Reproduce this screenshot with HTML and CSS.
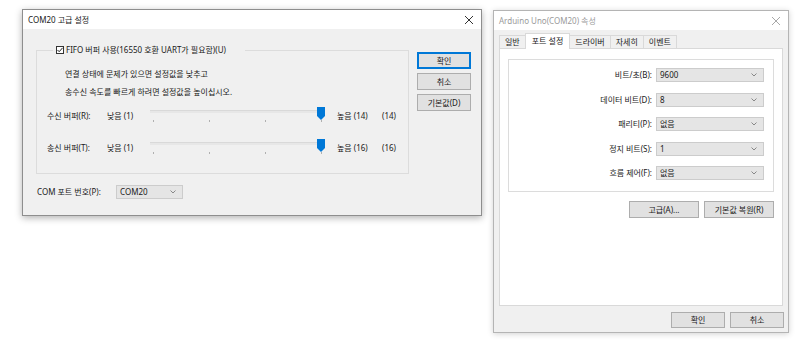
FILE: index.html
```html
<!DOCTYPE html>
<html lang="ko">
  <head>
    <meta charset="UTF-8" />
    <title>COM20 고급 설정</title>
    <link rel="stylesheet" href="styles.css">
  </head>
  <body>
    <div class="desktop">
      <!-- 고급 설정 창 -->
      <div class="window window-active advanced">
        <div class="titlebar">
          <span class="title">COM20 고급 설정</span>
          <svg class="close" width="10" height="10" viewBox="0 0 10 10"><path d="M1 1 L9 9 M9 1 L1 9" /></svg>
        </div>
        <div class="dialog-body">
          <div class="advanced-main">
            <fieldset class="group fifo">
              <legend>
                <svg class="check" width="8" height="8" viewBox="0 0 8 8"><rect x="0.5" y="0.5" width="7" height="7" /><path d="M1.5 4 L3.2 5.7 L6.6 1.8" /></svg>
                FIFO 버퍼 사용(16550 호환 UART가 필요함)(U)
              </legend>
              <p class="hint first">연결 상태에 문제가 있으면 설정값을 낮추고</p>
              <p class="hint">송수신 속도를 빠르게 하려면 설정값을 높이십시오.</p>

              <div class="slider-row">
                <span>수신 버퍼(R):</span>
                <span>낮음 (1)</span>
                <div class="slider">
                  <div class="track"></div>
                  <svg class="thumb" width="8" height="13" viewBox="0 0 8 13"><path d="M0 0 H8 V9 L4 13 L0 9 Z" /></svg>
                  <div class="ticks"><i></i><i></i><i></i><i></i></div>
                </div>
                <span class="high">높음 (14)</span>
                <span>(14)</span>
              </div>

              <div class="slider-row">
                <span>송신 버퍼(T):</span>
                <span>낮음 (1)</span>
                <div class="slider">
                  <div class="track"></div>
                  <svg class="thumb" width="8" height="13" viewBox="0 0 8 13"><path d="M0 0 H8 V9 L4 13 L0 9 Z" /></svg>
                  <div class="ticks"><i></i><i></i><i></i><i></i></div>
                </div>
                <span class="high">높음 (16)</span>
                <span>(16)</span>
              </div>
            </fieldset>

            <div class="side-buttons">
              <button class="btn btn-default">확인</button>
              <button class="btn">취소</button>
              <button class="btn">기본값(D)</button>
            </div>
          </div>

          <div class="port-row">
            <span class="port-label">COM 포트 번호(P):</span>
            <div class="combo port-combo">
              <span>COM20</span>
              <svg class="chevron" width="6" height="4" viewBox="0 0 6 4"><path d="M0.5 0.5 L3 3 L5.5 0.5" /></svg>
            </div>
          </div>
        </div>
      </div>

      <!-- 속성 창 -->
      <div class="window window-inactive props">
        <div class="titlebar">
          <span class="title">Arduino Uno(COM20) 속성</span>
          <svg class="close" width="10" height="10" viewBox="0 0 10 10"><path d="M1 1 L9 9 M9 1 L1 9" /></svg>
        </div>
        <div class="dialog-body props-body">
          <div class="tabs">
            <div class="tab">일반</div>
            <div class="tab selected">포트 설정</div>
            <div class="tab">드라이버</div>
            <div class="tab">자세히</div>
            <div class="tab">이벤트</div>
          </div>
          <div class="tab-panel">
            <div class="settings-box">
              <div class="setting">
                <span class="setting-label">비트/초(B):</span>
                <div class="combo"><span>9600</span><svg class="chevron" width="6" height="4" viewBox="0 0 6 4"><path d="M0.5 0.5 L3 3 L5.5 0.5" /></svg></div>
              </div>
              <div class="setting">
                <span class="setting-label">데이터 비트(D):</span>
                <div class="combo"><span>8</span><svg class="chevron" width="6" height="4" viewBox="0 0 6 4"><path d="M0.5 0.5 L3 3 L5.5 0.5" /></svg></div>
              </div>
              <div class="setting">
                <span class="setting-label">패리티(P):</span>
                <div class="combo"><span>없음</span><svg class="chevron" width="6" height="4" viewBox="0 0 6 4"><path d="M0.5 0.5 L3 3 L5.5 0.5" /></svg></div>
              </div>
              <div class="setting">
                <span class="setting-label">정지 비트(S):</span>
                <div class="combo"><span>1</span><svg class="chevron" width="6" height="4" viewBox="0 0 6 4"><path d="M0.5 0.5 L3 3 L5.5 0.5" /></svg></div>
              </div>
              <div class="setting">
                <span class="setting-label">흐름 제어(F):</span>
                <div class="combo"><span>없음</span><svg class="chevron" width="6" height="4" viewBox="0 0 6 4"><path d="M0.5 0.5 L3 3 L5.5 0.5" /></svg></div>
              </div>
            </div>
            <div class="panel-buttons">
              <button class="btn btn-wide">고급(A)...</button>
              <button class="btn btn-wide">기본값 복원(R)</button>
            </div>
          </div>
          <div class="footer-buttons">
            <button class="btn btn-footer">확인</button>
            <button class="btn btn-footer">취소</button>
          </div>
        </div>
      </div>
    </div>
  </body>
</html>
```

FILE: styles.css
```css
* {
  box-sizing: border-box;
  margin: 0;
  padding: 0;
}

body {
  background: #ffffff;
  color: #1a1a1a;
  font-family: "Noto Sans", "Noto Sans CJK KR", sans-serif;
  font-size: 8px;
  line-height: 12px;
}

.desktop {
  position: relative;
  width: 800px;
  height: 344px;
  overflow: hidden;
}

/* 창 공통 */
.window {
  position: absolute;
  display: flex;
  flex-direction: column;
  background: #f0f0f0;
}

.window-active {
  border: 1px solid #8e8e8e;
  box-shadow: 0 2px 7px rgba(0, 0, 0, 0.3);
}

.window-inactive {
  border: 1px solid #b4b4b4;
  box-shadow: 0 1px 6px rgba(0, 0, 0, 0.18);
}

.advanced {
  left: 22px;
  top: 9px;
  width: 460px;
  height: 207px;
}

.props {
  left: 493px;
  top: 10px;
  width: 296px;
  height: 323px;
}

.titlebar {
  height: 19px;
  background: #ffffff;
  display: flex;
  align-items: center;
  justify-content: space-between;
  padding: 0 7px 0 5px;
  flex-shrink: 0;
}

.window-inactive .title {
  color: #9a9a9a;
}

.close {
  fill: none;
  stroke: #333;
  stroke-width: 1;
}

.window-inactive .close {
  stroke: #a8a8a8;
}

.dialog-body {
  flex: 1;
  display: flex;
  flex-direction: column;
}

/* 고급 설정 */
.advanced .dialog-body {
  padding: 15px 0 0 13px;
}

.advanced-main {
  display: flex;
  gap: 8px;
  align-items: flex-start;
}

.group {
  border: 1px solid #dcdcdc;
  min-width: 0;
}

.fifo {
  width: 373px;
  height: 130px;
  padding: 0;
}

.fifo legend {
  margin-left: 16px;
  padding: 0 19px 0 3px;
  height: 12px;
  line-height: 12px;
  display: flex;
  align-items: center;
  gap: 2px;
}

.check {
  fill: #ffffff;
  stroke: #333;
  stroke-width: 1;
}

.check path {
  fill: none;
  stroke: #222;
}

.hint {
  line-height: 18px;
  padding-left: 28px;
}

.hint.first {
  margin-top: 9px;
}

.slider-row {
  display: grid;
  grid-template-columns: 60px 43px 175px 57px auto;
  align-items: center;
  height: 20px;
  padding-left: 10px;
  margin-top: 5px;
}

.slider-row + .slider-row {
  margin-top: 12px;
}

.high {
  padding-left: 12px;
}

.slider {
  position: relative;
  height: 20px;
}

.track {
  margin-top: 4px;
  height: 3px;
  background: #e7e7e7;
  border-top: 1px solid #d9d9d9;
}

.thumb {
  position: absolute;
  left: 167px;
  top: 1px;
  fill: #0078d7;
}

.ticks {
  display: flex;
  justify-content: space-between;
  padding: 0 3px;
  margin-top: 7px;
}

.ticks i {
  width: 1px;
  height: 2px;
  background: #b0b0b0;
}

.side-buttons {
  display: flex;
  flex-direction: column;
  gap: 4px;
  margin-top: 8px;
}

.btn {
  font: inherit;
  color: #1a1a1a;
  background: #e1e1e1;
  border: 1px solid #adadad;
  height: 17px;
  line-height: 12px;
  padding: 0;
}

.side-buttons .btn {
  width: 54px;
}

.btn-default {
  border: 2px solid #0078d7;
}

.port-row {
  display: flex;
  align-items: center;
  margin-top: 11px;
  padding-left: 1px;
}

.port-label {
  width: 79px;
}

.combo {
  display: flex;
  align-items: center;
  justify-content: space-between;
  height: 14px;
  background: #e5e5e5;
  border: 1px solid #cccccc;
  padding: 0 6px 0 3px;
}

.port-combo {
  width: 67px;
}

.chevron {
  fill: none;
  stroke: #888;
  stroke-width: 1;
}

/* 속성 창 */
.props-body {
  padding: 3px 4px 4px 5px;
}

.tabs {
  display: flex;
  align-items: flex-end;
  height: 15px;
  position: relative;
  z-index: 1;
}

.tab {
  height: 13px;
  line-height: 12px;
  padding: 0 5px;
  border: 1px solid #d9d9d9;
  border-bottom: none;
  background: #f0f0f0;
  margin-right: -1px;
}

.tab.selected {
  height: 16px;
  margin-bottom: -1px;
  background: #ffffff;
  padding: 1px 6px 0;
  position: relative;
}

.tab-panel {
  flex: 1;
  width: 284px;
  background: #ffffff;
  border: 1px solid #d9d9d9;
  padding: 10px 8px 0 8px;
}

.settings-box {
  border: 1px solid #dcdcdc;
  height: 133px;
  padding: 8px 9px 0 0;
  display: flex;
  flex-direction: column;
  gap: 10.5px;
}

.setting {
  display: flex;
  align-items: center;
  justify-content: flex-end;
  gap: 4px;
}

.setting .combo {
  width: 108px;
}

.panel-buttons {
  display: flex;
  justify-content: flex-end;
  gap: 5px;
  margin-top: 9px;
}

.btn-wide {
  width: 70px;
}

.footer-buttons {
  display: flex;
  justify-content: flex-end;
  gap: 5px;
  margin-top: 6px;
}

.btn-footer {
  width: 54px;
  height: 16px;
}
```
